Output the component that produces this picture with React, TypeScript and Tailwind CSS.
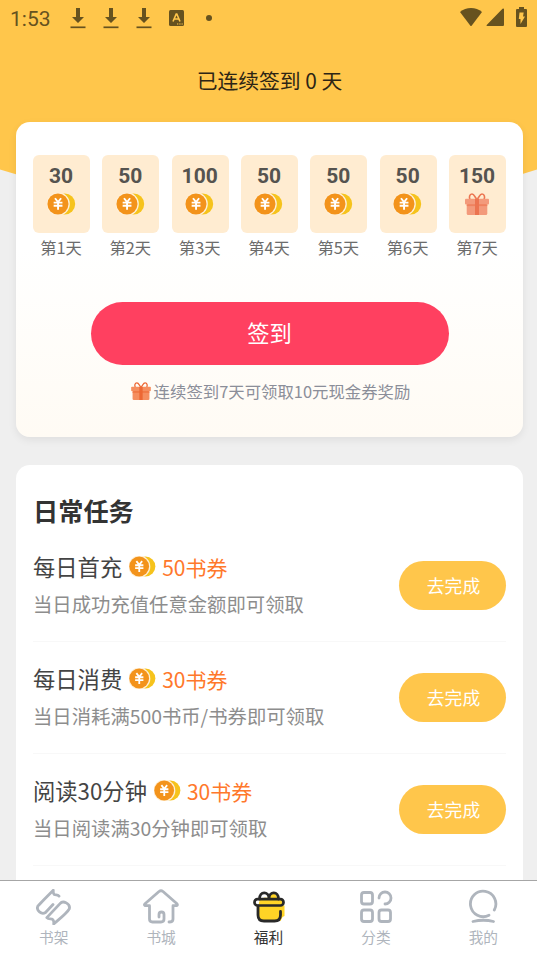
import React from "react";

const days = [30, 50, 100, 50, 50, 50, 150];

const tasks = [
  { title: "每日首充", reward: "50书券", desc: "当日成功充值任意金额即可领取" },
  { title: "每日消费", reward: "30书券", desc: "当日消耗满500书币/书券即可领取" },
  { title: "阅读30分钟", reward: "30书券", desc: "当日阅读满30分钟即可领取" },
];

function Coins({ className }: { className: string }) {
  return (
    <svg viewBox="0 0 30 23" className={className}>
      <circle cx="18.3" cy="11.5" r="11" fill="#f6c31c" />
      <circle cx="11.5" cy="11.5" r="12.2" fill="#fff0d8" />
      <circle cx="11.3" cy="11.5" r="11" fill="#f3931b" />
      <path d="M8.2 5.5l3.2 4 3.2-4M6.800 10.100h9.200M6.800 13.400h9.200M11.400 9.500v8" fill="none" stroke="#fff" strokeWidth="2" />
    </svg>
  );
}

function Gift({ className, soft }: { className: string; soft?: boolean }) {
  const box = soft ? "#f39a7b" : "#f58e5f";
  const band = soft ? "#ec7450" : "#ed6733";
  return (
    <svg viewBox="0 0 24 22" className={className}>
      <path d="M12 6.2C9.500 4.800 9.700 1 7 1S4 4.500 5 6.200M12 6.200C14.500 4.800 14.300 1 17 1s3 3.500 2 5.200" fill="none" stroke={band} strokeWidth="1.6" />
      <rect x="0" y="5.800" width="24" height="5.600" rx="1" fill={box} />
      <rect x="1.700" y="11" width="20.600" height="11" rx="1.500" fill={box} />
      <path d="M1.700 11.200h20.600v1.900H1.700z" fill={band} opacity=".65" />
      <path d="M10 5.800h4V22h-4z" fill={band} />
    </svg>
  );
}

function Download() {
  return (
    <svg viewBox="0 0 16 21" className="h-[21px] w-4">
      <path d="M6 0h4v9h4l-6 6-6-6h4z" fill="#66521f" />
      <path d="M.5 19.300h15" stroke="#66521f" strokeWidth="1.700" />
    </svg>
  );
}

function StatusBar() {
  return (
    <div className="flex h-9 items-center px-[10px] text-[#66521f]">
      <span className="w-[60px] pt-[2px] font-[Roboto] text-[21px] leading-6">1:53</span>
      <div className="flex gap-[17px]">
        <Download />
        <Download />
        <Download />
      </div>
      <svg viewBox="0 0 15 16" className="ml-[17px] h-4 w-[15px]">
        <rect width="15" height="16" rx="1.500" fill="#66521f" />
        <path d="M4 11.500L7.200 4h.6L11 11.500M5.300 9h4.400" fill="none" stroke="#ffc64b" strokeWidth="1.600" />
        <path d="M8 14h1.300M10.300 14h1.300M12.500 14h1.300" stroke="#ffc64b" strokeWidth="1.200" />
      </svg>
      <span className="ml-[22px] size-[6px] rounded-full bg-[#66521f]" />
      <div className="ml-auto flex items-center pb-[2px]">
        <svg viewBox="0 0 22 18" className="h-[18px] w-[22px]">
          <path d="M0 4C6-1.200 16-1.200 22 4L11.800 17.500q-.8 1-1.600 0z" fill="#66521f" />
        </svg>
        <svg viewBox="0 0 18 18" className="ml-[4px] h-[18px] w-[18px]">
          <path d="M18 1v16q0 1-1 1H1q-1-.3-.3-1L16.500.8q1.200-.8 1.500.2z" fill="#66521f" />
        </svg>
        <svg viewBox="0 0 11 20" className="ml-[12px] h-5 w-[11px]">
          <path d="M3 0h5v2h2q1 0 1 1v16q0 1-1 1H1q-1 0-1-1V3q0-1 1-1h2z" fill="#66521f" />
          <path d="M3.500 5.500h4.200L7 9.500h2L4.500 17v-5H2.800z" fill="#ffc64b" />
        </svg>
      </div>
    </div>
  );
}

const navIcons = [
  <path key="shelf" d="M9.500 23.500C5.500 26 0 21.500 1.800 17.200 4 14.500 11 7.500 17.300 1.200c-.2 2.300.3 3.800 1 4.300 1.500.8 3.200-.2 4.700 1.600M9.500 23.500L17 15.500M10.800 28.600l13.200-14c3-3.700 10.700 0 9.300 5.300-1.800 3.700-9.300 9.700-15.600 15.100.3-2.300-.2-4-1.200-4.700-1.700-.8-4 .2-5.700-1.700z" />,
  <path key="city" d="M6.500 16.700H2.200Q.7 16 2 14.800L16 2.500q2-1.500 4 0L34 14.800q1 1.400-.6 1.900H30v13.500Q30 33 26 33M6.500 16.700V30q0 3 3 3H18q3 0 3-3v-4.500q0-2.500-2.500-2.500t-2.500 2.500V28" />,
  null,
  <g key="category">
    <rect x="3.500" y="3.500" width="11" height="11.500" rx="2.500" />
    <rect x="3.500" y="21" width="11" height="11.500" rx="2.500" />
    <rect x="21" y="21" width="11.500" height="11.500" rx="2.500" />
    <path d="M21 9a6 6 0 1 1 6 6" />
  </g>,
  <path key="me" d="M24 26.200A12.700 12.700 0 1 1 29.300 21M8 32.500q10.500-2.500 20.500 0" />,
];

function GiftTab() {
  return (
    <svg viewBox="0 0 36 36" className="size-[36px]">
      <path d="M14 8.500q3.500 1 4.500-1 3-4.500 6.500-1.500l2 4h5v6.500h1.500V27l-2 1-2 4H10l-2.500-3V16L9 10z" fill="#ffd426" />
      <path d="M8.500 10C8.500 2 17.800 2 18 9.500 18.200 2 27.500 2 27.500 10M7 17V26q0 6 6 6h10.500q6 0 6-6v-3.500" fill="none" stroke="#292929" strokeWidth="2.800" strokeLinecap="round" />
      <rect x="3.500" y="10.200" width="29" height="6.300" rx="3" fill="none" stroke="#292929" strokeWidth="2.700" />
    </svg>
  );
}

export default function App() {
  return (
    <div className="flex h-[956px] w-[537px] flex-col overflow-hidden bg-[#efefef] font-['Noto_Sans_CJK_SC',sans-serif]">
      <main className="relative isolate min-h-0 flex-1 overflow-hidden">
        <svg viewBox="0 0 537 230" className="absolute left-0 top-0 -z-10 h-[230px] w-[537px]">
          <path d="M0 0H537V169.500Q268.500 255 0 169.500Z" fill="#ffc64b" />
        </svg>
        <StatusBar />
        <h1 className="flex h-[86px] items-center justify-center pl-[2px] pt-[3px] text-[20.8px] leading-none text-[#2d2515]">已连续签到 0 天</h1>

        <section className="ml-4 mr-[14px] flex h-[315px] flex-col items-center rounded-[14px] bg-gradient-to-b from-white from-40% to-[#fffbf4] px-[17px] pt-[33px] shadow-[0_3px_8px_rgba(0,0,0,0.07)]">
          <div className="flex w-full justify-between">
            {days.map((amount, i) => (
              <div key={i} className="flex w-[57px] flex-col items-center">
                <div className="flex h-[78px] w-full flex-col items-center rounded-[6px] bg-[#ffecd1] pt-[9px]">
                  <span className="mr-px font-[Roboto] text-[21px] font-bold leading-6 text-[#55534f]">{amount}</span>
                  {i === 6 ? <Gift soft className="mt-[5px] h-[22px] w-6" /> : <Coins className="mr-px mt-[5px] h-[22px] w-[29px]" />}
                </div>
                <span className="mr-px mt-[2px] whitespace-nowrap text-[16.3px] leading-6 text-[#6c6c6c]">第{i + 1}天</span>
              </div>
            ))}
          </div>
          <button className="mt-[43px] h-[63px] w-[358px] rounded-full bg-[#ff4060] pb-[2px] text-[22.3px] leading-none text-white">签到</button>
          <div className="mt-[14px] flex h-6 items-center pl-[2px] text-[16.4px] leading-6 text-[#8b8e99]">
            <Gift className="mr-[3px] h-[18px] w-5" />
            <span>连续签到7天可领取10元现金券奖励</span>
          </div>
        </section>

        <section className="ml-4 mr-[14px] mt-[28px] h-[440px] rounded-t-[14px] bg-white px-[17px] pt-[27px]">
          <h2 className="h-[38px] text-[25.2px] font-bold leading-[36px] text-[#333]">日常任务</h2>
          {tasks.map((task) => (
            <div key={task.title} className="flex h-[112px] items-center justify-between border-b border-[#f8f8f8]">
              <div className="pb-[2px]">
                <div className="flex h-[38px] items-center leading-[38px]">
                  <span className="-mt-px text-[22.3px] text-[#444]">{task.title}</span>
                  <Coins className="ml-[7px] mr-[6px] h-[21px] w-[27px]" />
                  <span className="text-[21px] text-[#ff782b]">{task.reward}</span>
                </div>
                <p className="h-[36px] text-[19.35px] leading-[36px] text-[#8d8d8d]">{task.desc}</p>
              </div>
              <button className="h-[49px] w-[107px] rounded-full bg-[#ffc64b] pl-[2px] text-[17.8px] leading-none text-white">去完成</button>
            </div>
          ))}
        </section>
      </main>

      <nav className="flex h-[76px] shrink-0 border-t border-[#a6a6a6] bg-white">
        {["书架", "书城", "福利", "分类", "我的"].map((label, i) => (
          <div key={label} className="flex flex-1 flex-col items-center pt-[8px]">
            {i === 2 ? (
              <GiftTab />
            ) : (
              <svg viewBox="0 0 36 36" className="size-[36px]" fill="none" stroke="#afb5bd" strokeWidth="2.800" strokeLinecap="round" strokeLinejoin="round">
                {navIcons[i]}
              </svg>
            )}
            <span className={i === 2 ? "text-[14.7px] leading-6 text-[#333]" : "text-[14.7px] leading-6 text-[#afb5bd]"}>{label}</span>
          </div>
        ))}
      </nav>
    </div>
  );
}
